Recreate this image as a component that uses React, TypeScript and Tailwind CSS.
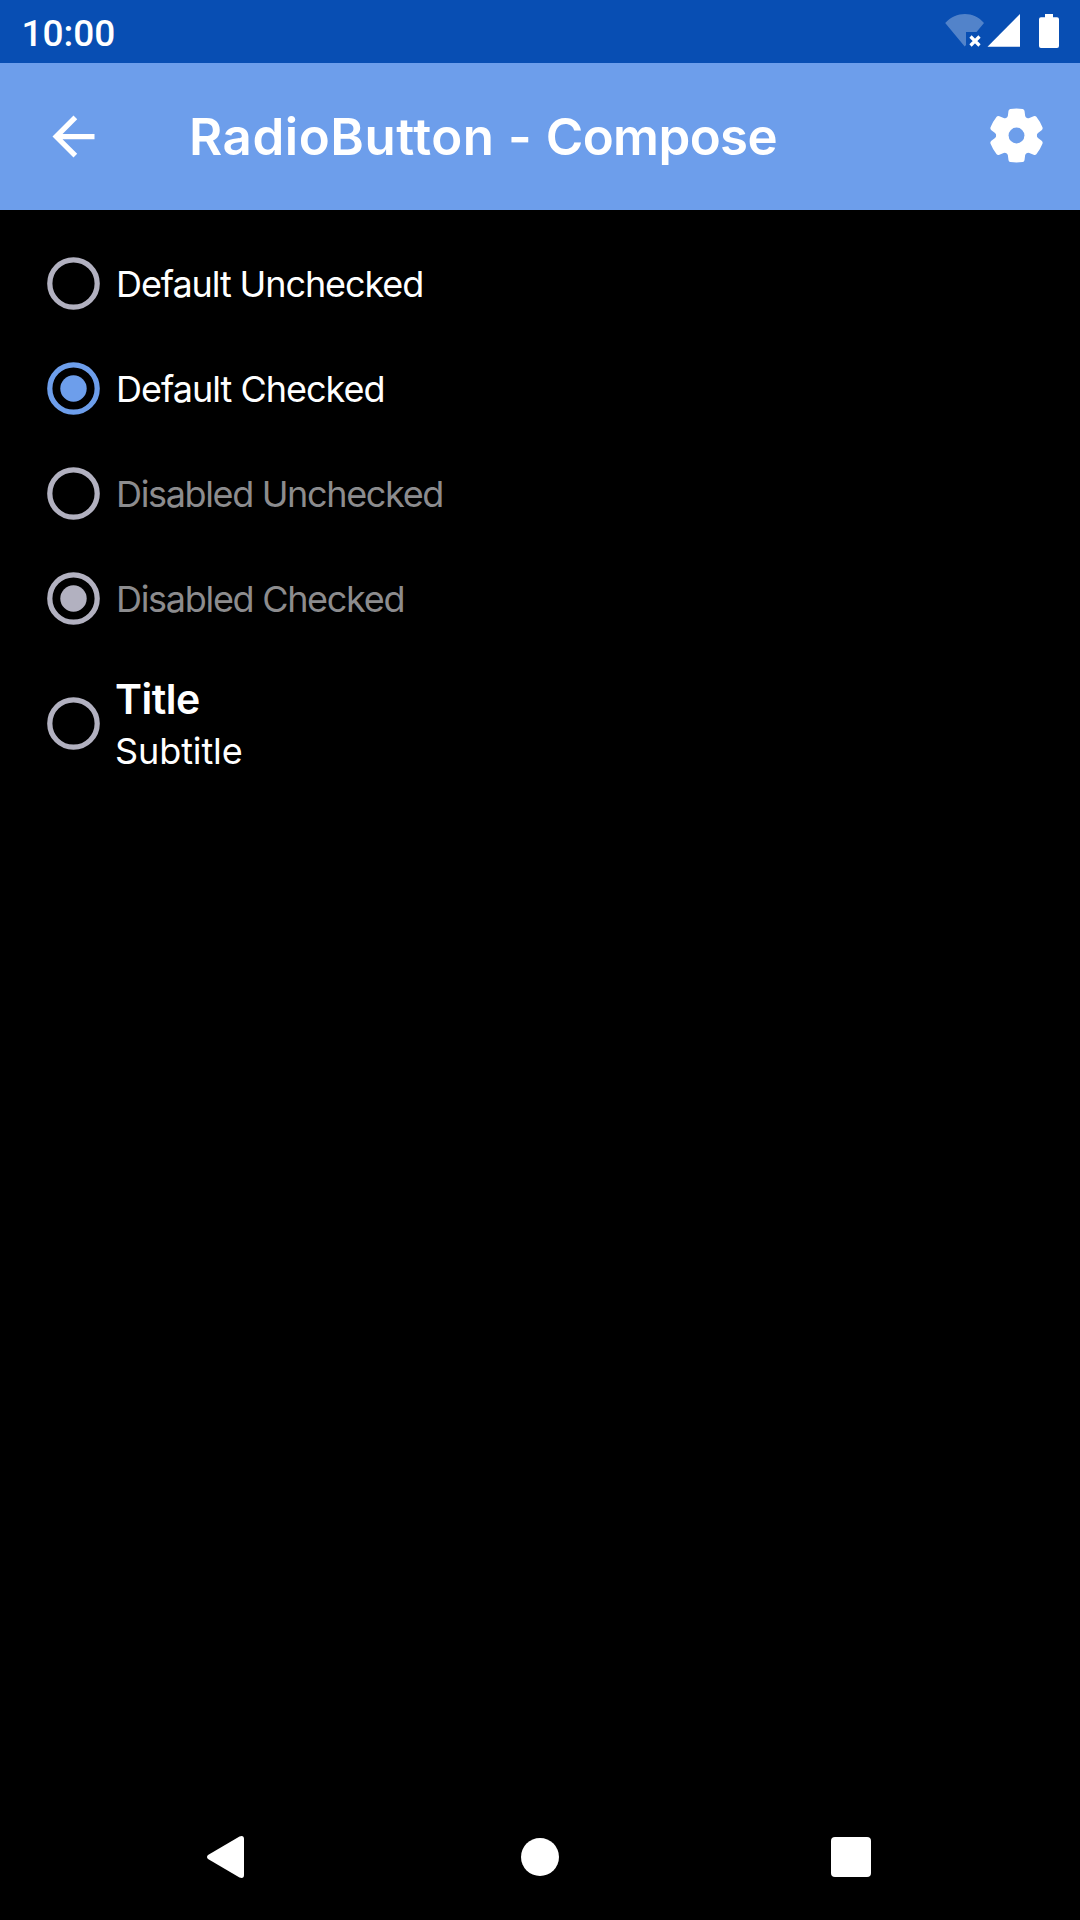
import React from "react";

const TEETH = [0, 60, 120, 180, 240, 300];

function StatusBar() {
  return (
    <div className="flex h-[63px] items-start justify-between bg-[#084eb3]">
      <span className="mt-[12px] ml-[21.5px] font-[Roboto] text-[37px] leading-[43px] font-medium">10:00</span>
      <svg className="h-[63px] w-[140px]" viewBox="940 0 140 63" fill="#fff">
        <path d="M964.7 46.5 945.2 23C956 11 974 11 984 23L976.5 32H966V45Z" opacity=".3" />
        <path d="m970.5 36.5 9 9m0-9-9 9" stroke="#fff" strokeWidth="3.2" fill="none" />
        <path d="M987.5 46.7H1020V14Z" />
        <path d="M1045 14h8v3.3h4q2 0 2 2V46q0 2-2 2h-16q-2 0-2-2V19.3q0-2 2-2h4Z" />
      </svg>
    </div>
  );
}

function Header() {
  return (
    <header className="flex h-[147px] items-center bg-[#6d9eeb]">
      <svg className="ml-[42px] size-[63px] shrink-0" viewBox="0 0 24 24" fill="#fff">
        <path d="M20 11H7.83l5.59-5.59L12 4l-8 8 8 8 1.41-1.41L7.83 13H20v-2z" />
      </svg>
      <h1 className="mt-[2px] ml-[84px] flex-1 text-[51px] font-semibold whitespace-nowrap">
        <span className="tracking-[0.55px]">RadioButton - </span>
        <span className="tracking-[-0.6px]">Compose</span>
      </h1>
      <svg className="mr-[32px] mb-[2px] size-[63px] shrink-0" viewBox="-31 -31 62 62" fill="#fff">
        <circle r="19.8" />
        {TEETH.map((angle) => (
          <path
            key={angle}
            transform={`rotate(${angle})`}
            d="M0 0-10.2-17.200Q-8.800-17.800-8.500-19.500L-7.900-24Q-7.700-25.800-6.100-26.100Q0-27 6.100-26.100Q7.700-25.800 7.900-24L8.500-19.500Q8.800-17.800 10.200-17.200Z"
          />
        ))}
        <circle r="7.8" fill="#6d9eeb" />
      </svg>
    </header>
  );
}

function Radio({ checked, accent }: { checked?: boolean; accent?: boolean }) {
  return (
    <svg className={`size-[53px] shrink-0 ${accent ? "text-[#6d9eeb]" : "text-[#b2b1c0]"}`} viewBox="0 0 53 53">
      <circle cx="26.5" cy="26.5" r="23.7" fill="none" stroke="currentColor" strokeWidth="5.25" />
      {checked && <circle cx="26.5" cy="26.5" r="13.2" fill="currentColor" />}
    </svg>
  );
}

const OPTIONS = [
  { label: "Default Unchecked", spacing: "tracking-[-1.1px]" },
  { label: "Default Checked", checked: true, spacing: "tracking-[-1px]" },
  { label: "Disabled Unchecked", disabled: true, spacing: "tracking-[-1.35px]" },
  { label: "Disabled Checked", checked: true, disabled: true, spacing: "tracking-[-1.3px]" },
];

export default function App() {
  return (
    <div className="flex h-[1920px] w-[1080px] flex-col overflow-hidden bg-black font-[Inter,sans-serif] text-white">
      <StatusBar />
      <Header />
      <main className="flex flex-1 flex-col pt-[21px] pl-[47px]">
        {OPTIONS.map((o) => (
          <div key={o.label} className="flex h-[105px] items-center gap-4">
            <Radio checked={o.checked} accent={o.checked && !o.disabled} />
            <span className={`text-[36px] leading-[44px] font-normal whitespace-nowrap ${o.spacing} ${o.disabled ? "text-[#8c8c8e]" : ""}`}>
              {o.label}
            </span>
          </div>
        ))}
        <div className="mt-5 flex h-[105px] items-center gap-[15px]">
          <Radio />
          <div className="pt-[3px]">
            <div className="text-[41px] leading-[52px] font-semibold tracking-[-0.5px]">Title</div>
            <div className="text-[36px] leading-[52px] font-normal tracking-[-0.1px]">Subtitle</div>
          </div>
        </div>
      </main>
      <nav className="flex h-[126px] items-center">
        <svg className="ml-[207px] h-[42px] w-[37px]" viewBox="0 0 37 42" fill="#fff">
          <path d="M1 19Q-1 21 1 23L32.500 41.500Q37 43 37 39V3Q37-1 32.500.5Z" />
        </svg>
        <div className="ml-[277.2px] size-[37.5px] rounded-full bg-white" />
        <div className="ml-[272.3px] size-10 rounded-[4px] bg-white" />
      </nav>
    </div>
  );
}
